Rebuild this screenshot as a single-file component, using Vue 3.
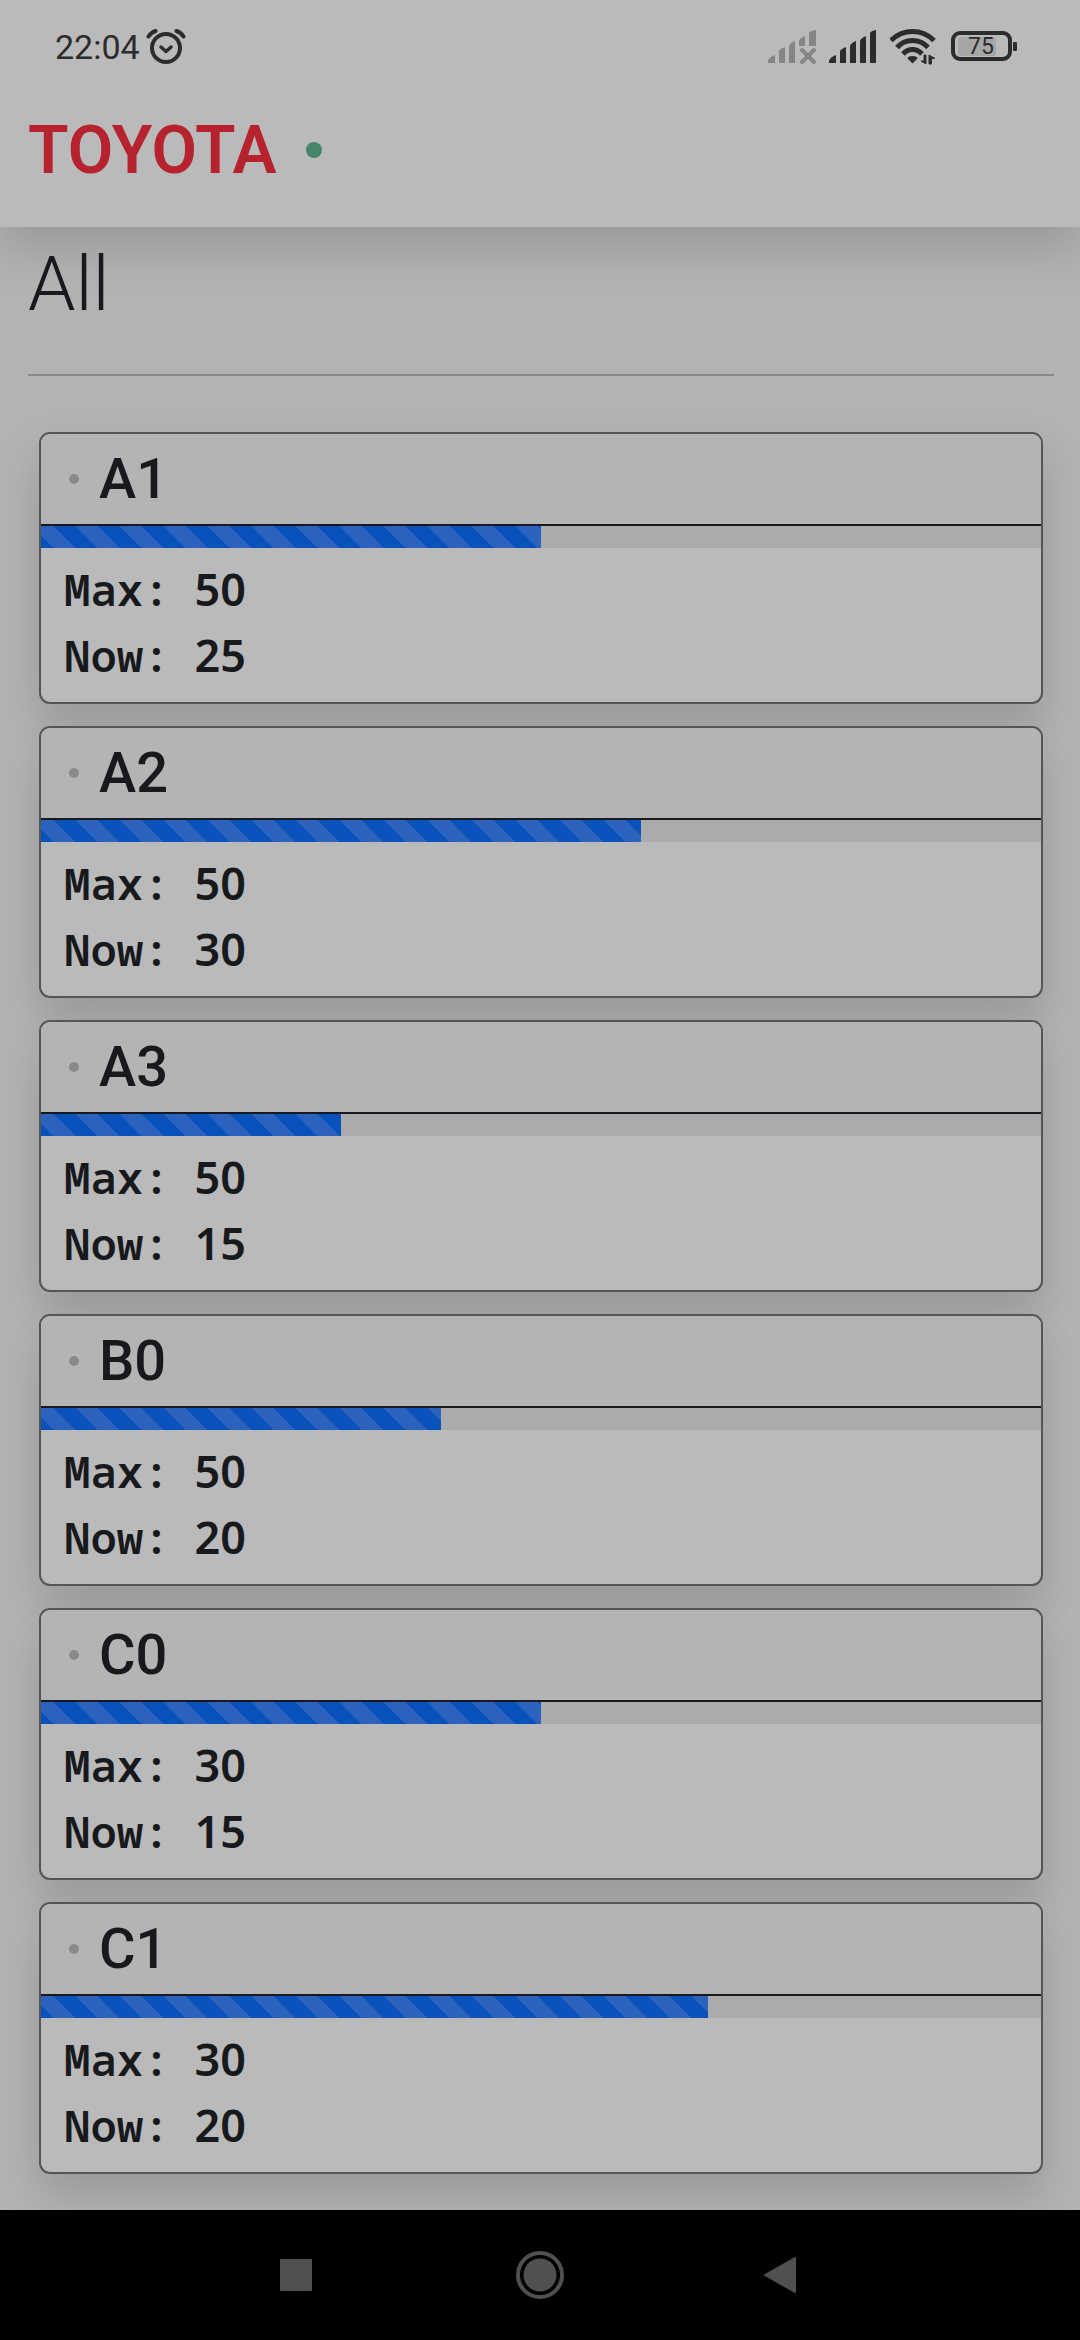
<script setup>
const lots = [
  { name: 'A1', max: 50, now: 25 },
  { name: 'A2', max: 50, now: 30 },
  { name: 'A3', max: 50, now: 15 },
  { name: 'B0', max: 50, now: 20 },
  { name: 'C0', max: 30, now: 15 },
  { name: 'C1', max: 30, now: 20 },
]
</script>

<template>
  <div class="screen">
    <header class="top">
      <div class="status">
        <time class="clock">22:04</time>
        <svg class="alarm" width="40" height="36" viewBox="0 0 40 36" fill="none" stroke="#2c2c2c" stroke-linecap="round">
          <circle cx="20" cy="19" r="14" stroke-width="4" />
          <path d="M2.500 7.500Q5 3.500 9.500 2M30.500 2Q35 3.500 37.500 7.500" stroke-width="4" />
          <path d="M15 18l5 4.500 5-4.500" stroke-width="3.500" stroke-linejoin="round" />
        </svg>
        <div class="indicators">
          <svg width="48" height="36" viewBox="0 0 48 36" fill="#858585">
            <path d="M0 34v-2q1-4 7-6v8zM11 34V22q1-2 6-4v16zM21 34V17q1-3 6-5v22zM31 17v-5q1-3 6-5v10zM41 17V4q1-2 7-3v16z" />
            <path d="M34 21l12 12M46 21L34 33" stroke="#858585" stroke-width="4" stroke-linecap="round" />
          </svg>
          <svg width="48" height="36" viewBox="0 0 48 36" fill="#2c2c2c">
            <path d="M0 34v-2q1-4 7-6v8zM11 34V22q1-2 6-4v16zM21 34V17q1-3 6-5v22zM31 34V12q1-3 6-5v27zM41 34V4q1-2 6-3v33z" />
          </svg>
          <svg width="48" height="36" viewBox="0 0 48 36" fill="none" stroke="#2c2c2c">
            <path d="M1 11.500Q10 2.500 22.500 2.500T44 11.500M7 18.500Q13 11.500 22.500 11.500T38 18.500M13 25Q17 20.500 22.500 20.500T32 25" stroke-width="5" />
            <path d="M22.500 34.500l-5-5q0-2.500 5-2.500t5 2.500z" fill="#2c2c2c" stroke="none" />
            <path d="M36 26v9l-5-3h3v-6zM39 35v-9l6 3.500h-3.500V35z" fill="#2c2c2c" stroke="#2c2c2c" />
          </svg>
          <svg class="battery" width="68" height="36" viewBox="0 0 68 36">
            <rect x="7" y="8" width="38" height="19" rx="3" fill="#a6a6a6" />
            <rect x="2" y="4" width="57" height="26" rx="7" fill="none" stroke="#2c2c2c" stroke-width="4" />
            <rect x="62" y="13" width="4" height="9" rx="1" fill="#2c2c2c" />
            <text x="30" y="25" text-anchor="middle" fill="#2c2c2c">75</text>
          </svg>
        </div>
      </div>
      <div class="brand">
        <span class="logo">TOYOTA</span>
        <i class="online"></i>
      </div>
    </header>

    <main>
      <h1>All</h1>
      <hr />
      <section class="cards">
        <article v-for="lot in lots" :key="lot.name" class="card">
          <h2><i class="dot"></i>{{ lot.name }}</h2>
          <div class="track" role="progressbar" :aria-label="lot.name" :aria-valuenow="lot.now" aria-valuemin="0" :aria-valuemax="lot.max">
            <div class="bar" :style="{ width: (lot.now / lot.max) * 100 + '%' }"></div>
          </div>
          <dl>
            <div class="row"><dt>Max:</dt><dd>{{ lot.max }}</dd></div>
            <div class="row"><dt>Now:</dt><dd>{{ lot.now }}</dd></div>
          </dl>
        </article>
      </section>
    </main>

    <nav>
      <button type="button" aria-label="Recent apps">
        <svg width="48" height="50" viewBox="0 0 48 50"><rect x="6" y="9" width="32" height="32" rx="1" fill="#505050" /></svg>
      </button>
      <button type="button" aria-label="Home">
        <svg width="48" height="50" viewBox="0 0 48 50">
          <circle cx="24" cy="25" r="22" fill="none" stroke="#505050" stroke-width="4" />
          <circle cx="24" cy="25" r="16.500" fill="#505050" />
        </svg>
      </button>
      <button type="button" aria-label="Back">
        <svg width="48" height="50" viewBox="0 0 48 50"><path d="M37 8v34L7 25z" fill="#505050" stroke="#505050" stroke-width="2" stroke-linejoin="round" /></svg>
      </button>
    </nav>
  </div>
</template>

<style>
body {
  margin: 0;
  background: #b3b3b3;
}
</style>

<style scoped>
.screen {
  min-height: 100vh;
  display: flex;
  flex-direction: column;
  font-family: Roboto, sans-serif;
  color: #17191c;
  background: #b3b3b3;
}
.top {
  background: #bababa;
  box-shadow: 0 22px 44px rgba(0, 0, 0, 0.15);
  padding-bottom: 29px;
}
.status {
  display: flex;
  align-items: center;
  height: 94px;
  padding: 0 61px 0 55px;
  color: #2c2c2c;
}
.clock {
  font-size: 34px;
}
.alarm {
  margin-left: 6px;
}
.indicators {
  display: flex;
  gap: 13px;
  margin-left: auto;
}
.battery text {
  font: 400 23px Roboto, sans-serif;
}
.brand {
  display: flex;
  align-items: center;
  gap: 30px;
  height: 104px;
  padding: 8px 28px 0;
  box-sizing: border-box;
}
.logo {
  font-size: 66px;
  font-weight: 600;
  color: #b6232e;
}
.online {
  width: 16px;
  height: 16px;
  border-radius: 50%;
  background: #46856a;
}
main {
  flex: 1;
  padding: 11px 26px 36px 28px;
}
h1 {
  margin: 0;
  font-size: 76px;
  font-weight: 300;
  line-height: 92px;
}
hr {
  height: 2px;
  margin: 44px 0 56px;
  border: 0;
  background: #8a8a8a;
}
.cards {
  display: grid;
  gap: 22px;
  padding: 0 11px;
}
.card {
  border: 2px solid #555;
  border-radius: 11px;
  background: #bababa;
  box-shadow: 0 22px 44px rgba(0, 0, 0, 0.15);
  overflow: hidden;
}
h2 {
  display: flex;
  align-items: center;
  gap: 20px;
  height: 90px;
  margin: 0;
  padding-left: 28px;
  border-bottom: 2px solid #17191c;
  background: #b4b4b4;
  font-size: 56px;
  font-weight: 500;
}
.dot {
  width: 10px;
  height: 10px;
  border-radius: 50%;
  background: #8a8a8a;
}
.track {
  height: 22px;
  background: #aaabad;
}
.bar {
  height: 100%;
  background: linear-gradient(45deg, #2a62bd 25%, #0a52bb 25% 50%, #2a62bd 50% 75%, #0a52bb 75%) -9px 0 / 44px 44px;
}
dl {
  margin: 0;
  padding: 8px 23px 14px;
}
.row {
  display: flex;
  gap: 25px;
  line-height: 66px;
  font-weight: 600;
}
dt {
  font-family: "Noto Sans Mono", "DejaVu Sans Mono", monospace;
  font-size: 44px;
}
dd {
  margin: 0;
  font-family: "Noto Sans", sans-serif;
  font-size: 45px;
}
nav {
  display: flex;
  justify-content: center;
  align-items: center;
  gap: 194px;
  height: 130px;
  background: #000;
}
button {
  display: flex;
  padding: 0;
  border: 0;
  background: none;
}
</style>
